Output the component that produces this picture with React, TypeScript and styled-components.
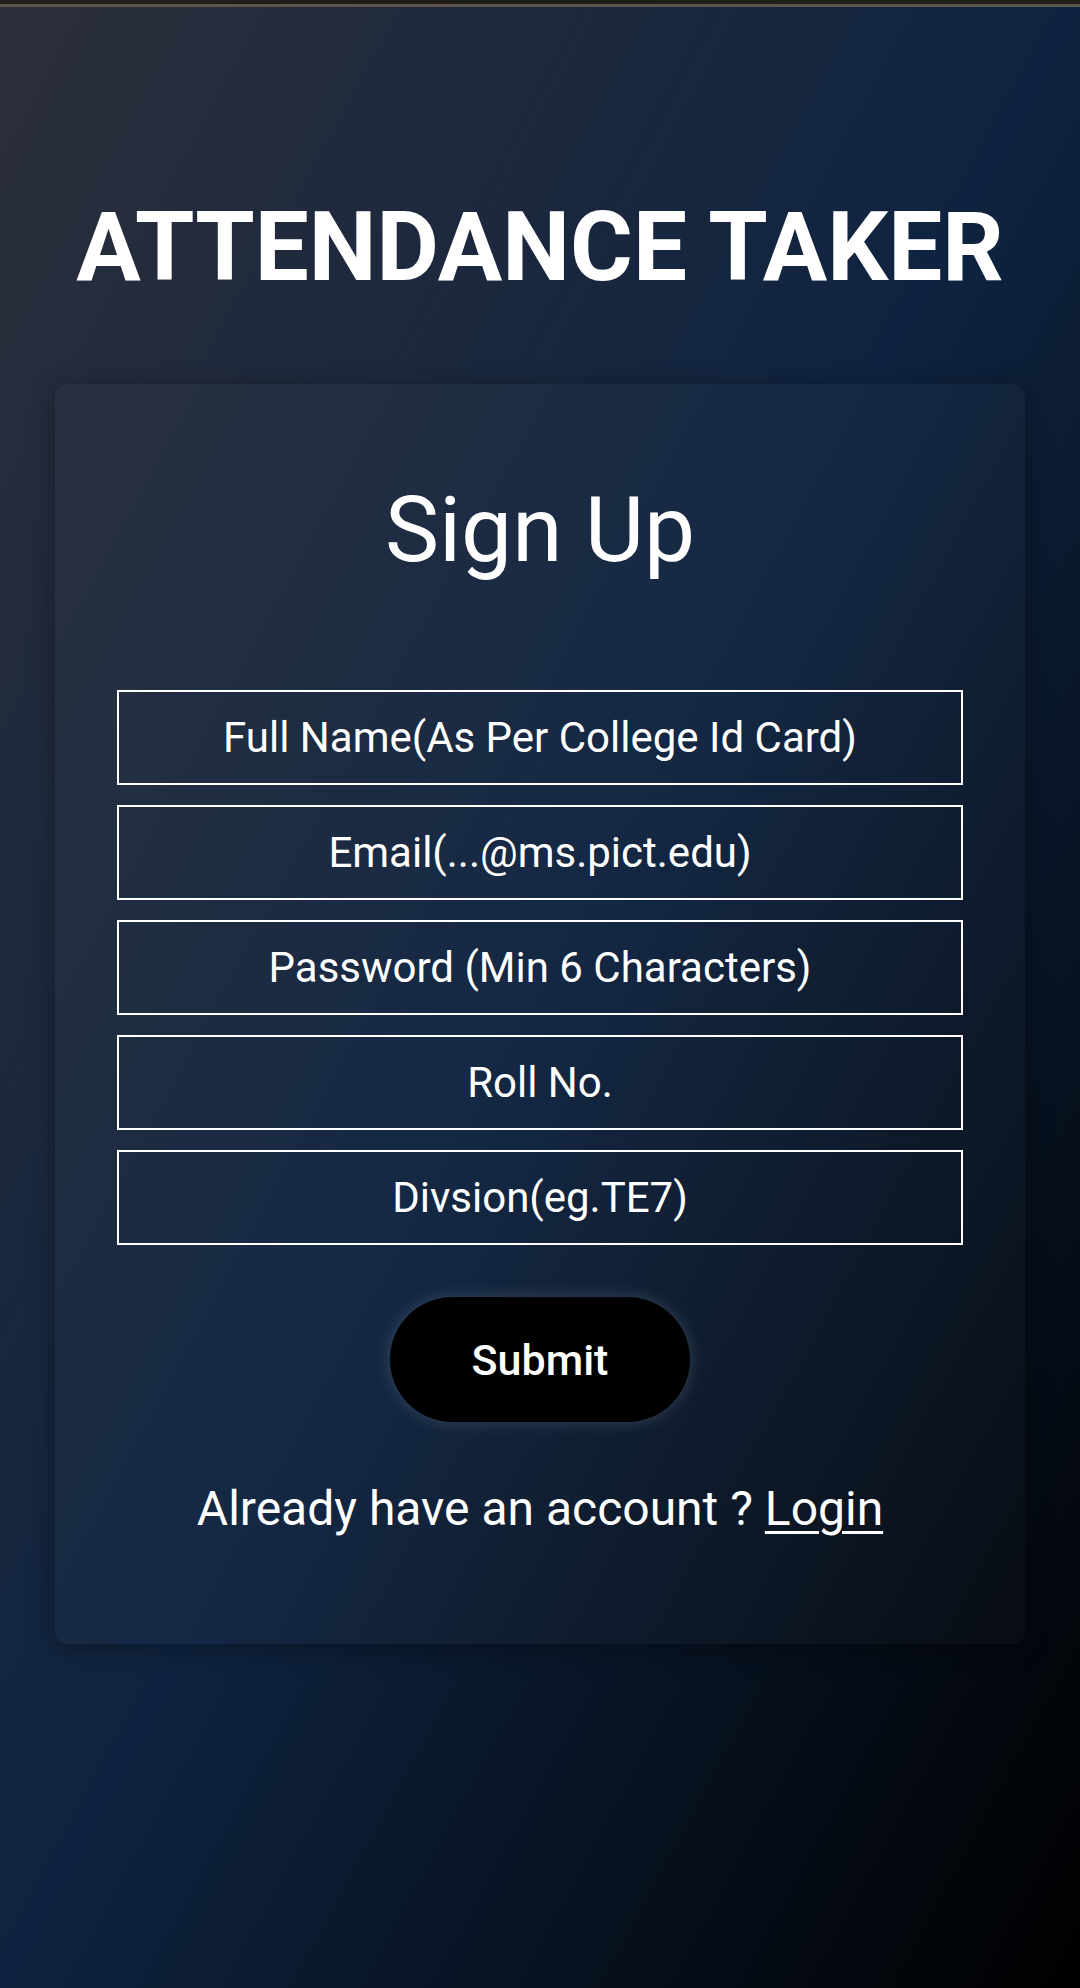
import React from 'react';
import styled, { createGlobalStyle } from 'styled-components';

const GlobalStyle = createGlobalStyle`
  * {
    box-sizing: border-box;
  }
  body {
    margin: 0;
    font-family: Roboto, "Liberation Sans", sans-serif;
    background: #000;
  }
`

const Page = styled.div`
  min-height: 1988px;
  display: flex;
  flex-direction: column;
  background: linear-gradient(to bottom right, #2c2f3a 0%, #0f2340 50%, #000000 100%);
  color: #fff;
`

const TopBar = styled.div`
  height: 7px;
  background: #1f1e19;
  border-bottom: 3px solid #5b554b;
`

const Title = styled.h1`
  margin: 184px 0 0;
  text-align: center;
  font-size: 96px;
  font-weight: 700;
  line-height: normal;
`

const Card = styled.div`
  width: 970px;
  margin: 81px auto 0;
  padding: 93px 62px 107px;
  display: flex;
  flex-direction: column;
  align-items: center;
  border-radius: 12px;
  background: rgba(255, 255, 255, 0.025);
  box-shadow: 0 4px 24px rgba(0, 0, 0, 0.35);
`

const CardTitle = styled.h2`
  margin: 0 0 107px;
  font-size: 91px;
  font-weight: 400;
  line-height: normal;
`

const Form = styled.form`
  width: 100%;
  display: flex;
  flex-direction: column;
  align-items: center;
  gap: 20px;
`

const Field = styled.input`
  width: 100%;
  height: 95px;
  border: 2px solid #fff;
  background: transparent;
  color: #fff;
  text-align: center;
  font-family: Roboto, "Liberation Sans", sans-serif;
  font-size: 42px;
  outline: none;

  &::placeholder {
    color: #fff;
    opacity: 1;
  }
`

const SubmitButton = styled.button`
  margin-top: 32px;
  width: 300px;
  height: 125px;
  border: none;
  border-radius: 63px;
  background: #000;
  color: #fff;
  font-family: Roboto, "Liberation Sans", sans-serif;
  font-size: 43px;
  font-weight: 500;
  box-shadow: 0 0 16px rgba(190, 200, 220, 0.22);
  cursor: pointer;
`

const Footnote = styled.p`
  margin: 58px 0 0;
  font-size: 48px;
  line-height: normal;
  text-align: center;

  a {
    color: #fff;
    text-decoration: underline;
    text-underline-offset: 6px;
    text-decoration-thickness: 3px;
  }
`

const fields = [
  'Full Name(As Per College Id Card)',
  'Email(...@ms.pict.edu)',
  'Password (Min 6 Characters)',
  'Roll No.',
  'Divsion(eg.TE7)',
]

export default function App() {
  return (
    <>
      <GlobalStyle />
      <Page>
        <TopBar />
        <Title>ATTENDANCE TAKER</Title>
        <Card>
          <CardTitle>Sign Up</CardTitle>
          <Form onSubmit={(e) => e.preventDefault()}>
            {fields.map((f) => (
              <Field key={f} placeholder={f} type={f.startsWith('Password') ? 'password' : 'text'} />
            ))}
            <SubmitButton type="submit">Submit</SubmitButton>
          </Form>
          <Footnote>
            Already have an account ? <a href="#">Login</a>
          </Footnote>
        </Card>
      </Page>
    </>
  );
}
